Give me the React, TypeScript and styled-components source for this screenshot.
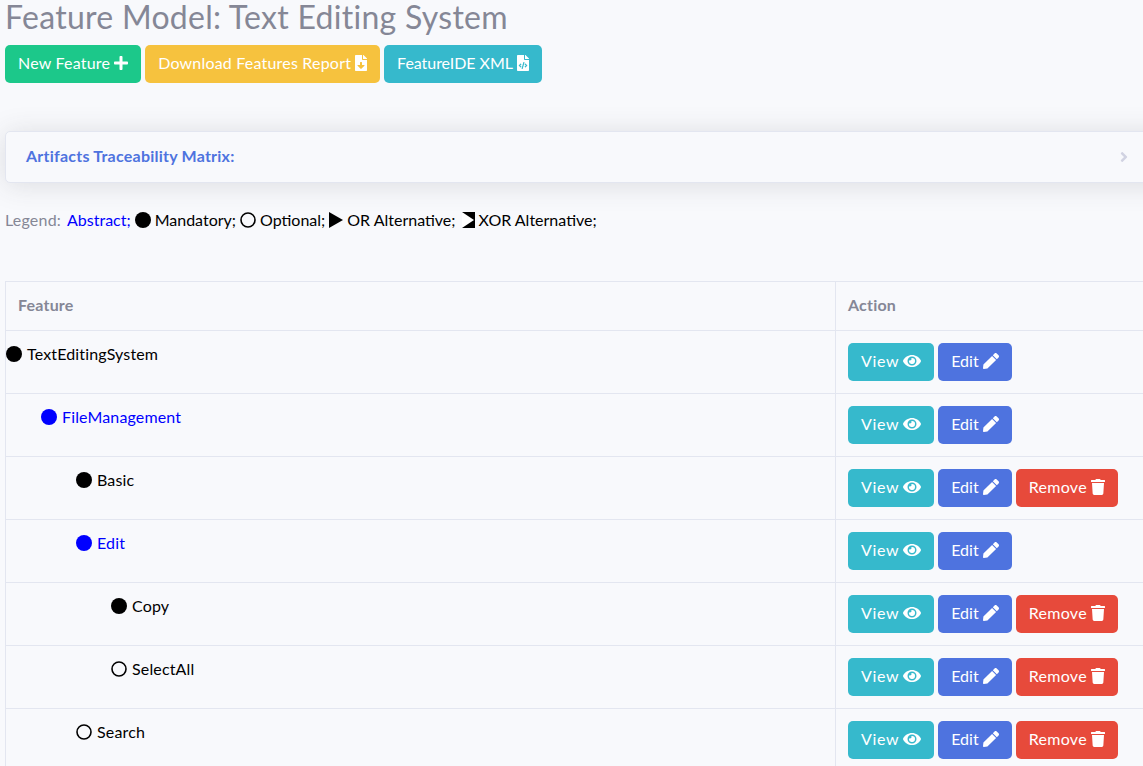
import React from "react";
import styled, { createGlobalStyle } from "styled-components";
import {
  FaAngleRight,
  FaEye,
  FaFileCode,
  FaFileDownload,
  FaPen,
  FaPlus,
  FaTrash,
} from "react-icons/fa";

type Kind = "mandatory" | "optional";

interface Feature {
  name: string;
  level: number;
  kind: Kind;
  abstract?: boolean;
  removable?: boolean;
}

const features: Feature[] = [
  { name: "TextEditingSystem", level: 0, kind: "mandatory" },
  { name: "FileManagement", level: 1, kind: "mandatory", abstract: true },
  { name: "Basic", level: 2, kind: "mandatory", removable: true },
  { name: "Edit", level: 2, kind: "mandatory", abstract: true },
  { name: "Copy", level: 3, kind: "mandatory", removable: true },
  { name: "SelectAll", level: 3, kind: "optional", removable: true },
  { name: "Search", level: 2, kind: "optional", removable: true },
];

const colors = {
  success: "#1cc88a",
  warning: "#f6c23e",
  info: "#36b9cc",
  primary: "#4e73df",
  danger: "#e74a3b",
};

const GlobalStyle = createGlobalStyle`
  html, body {
    margin: 0;
    height: 100%;
    overflow: hidden;
    background: #f8f9fc;
  }
  body {
    font-family: "Lato", "Open Sans", sans-serif;
    font-size: 16px;
    line-height: 1.5;
    color: #858796;
  }
`;

const Page = styled.div`
  width: 1180px;
  padding-left: 5px;
`;

const Title = styled.h2`
  margin: 0 0 11px;
  font-size: 32px;
  font-weight: 400;
  line-height: 34px;
  letter-spacing: 0.28px;
  color: #858796;
`;

const Toolbar = styled.div`
  display: flex;
  gap: 4px;
`;

const Button = styled.a<{ $color: keyof typeof colors; $spacing: number }>`
  display: inline-flex;
  align-items: center;
  gap: 4px;
  height: 38px;
  box-sizing: border-box;
  padding: 0 13px 2px;
  border-radius: 5px;
  background: ${(p) => colors[p.$color]};
  color: #fff;
  font-size: 16px;
  letter-spacing: ${(p) => p.$spacing}px;
  white-space: nowrap;
`;

// font awesome glyphs are not square, so each one keeps its own width
const PlusIcon = styled(FaPlus)`
  width: 14px;
  height: 16px;
`;

const DownloadIcon = styled(FaFileDownload)`
  width: 12px;
  height: 16px;
`;

const CodeIcon = styled(FaFileCode)`
  width: 12px;
  height: 16px;
`;

const EyeIcon = styled(FaEye)`
  width: 18px;
  height: 16px;
`;

const PenIcon = styled(FaPen)`
  width: 16px;
  height: 16px;
`;

const TrashIcon = styled(FaTrash)`
  width: 14px;
  height: 16px;
`;

const Card = styled.div`
  margin-top: 48px;
  display: flex;
  align-items: center;
  justify-content: space-between;
  height: 52px;
  box-sizing: border-box;
  padding: 0 52px 1px 20px;
  border: 1px solid #e3e6f0;
  border-radius: 5px;
  background: #f8f9fc;
  box-shadow: 0 2px 28px rgba(58, 59, 69, 0.15);
`;

const CardTitle = styled.span`
  padding-bottom: 2px;
  font-size: 16px;
  font-weight: 700;
  letter-spacing: 0.23px;
  color: ${colors.primary};
`;

const Chevron = styled(FaAngleRight)`
  font-size: 16px;
  color: #d1d3e2;
`;

const Legend = styled.div`
  margin-top: 25px;
  display: flex;
  align-items: center;
  gap: 4px;
  height: 24px;
  font-size: 16px;
`;

const LegendItem = styled.span<{ $tone?: "abstract" }>`
  color: ${(p) => (p.$tone === "abstract" ? "#0000ff" : "#000")};
`;

const LegendLabel = styled.span`
  margin-right: 2px;
  letter-spacing: 0.2px;
`;

const XorSlot = styled.span`
  display: flex;
  margin-left: 2px;
`;

const Table = styled.table`
  margin-top: 49px;
  width: 100%;
  border-collapse: collapse;
  table-layout: fixed;
`;

const HeadCell = styled.th<{ $width?: number }>`
  ${(p) => (p.$width ? `width: ${p.$width}px;` : "")}
  height: 49px;
  box-sizing: border-box;
  padding: 0 12px 2px;
  border: 1px solid #e3e6f0;
  text-align: left;
  font-weight: 700;
  letter-spacing: 0.2px;
  color: #858796;
`;

const Cell = styled.td`
  height: 63px;
  box-sizing: border-box;
  padding: 12px;
  border: 1px solid #e3e6f0;
  vertical-align: top;
`;

const NameCell = styled(Cell)`
  padding: 11px 12px 12px 0;
`;

const FeatureName = styled.div<{ $level: number; $abstract?: boolean }>`
  display: flex;
  align-items: center;
  gap: 5px;
  padding-left: ${(p) => p.$level * 35}px;
  letter-spacing: 0.15px;
  color: ${(p) => (p.$abstract ? "#0000ff" : "#000")};
`;

const Actions = styled.div`
  display: flex;
  gap: 4px;
`;

const Dot = ({ kind, color = "#000" }: { kind: Kind; color?: string }) => (
  <svg width="16" height="16" viewBox="0 0 16 16">
    {kind === "mandatory" ? (
      <circle cx="8" cy="8" r="8" fill={color} />
    ) : (
      <circle cx="8" cy="8" r="7" fill="none" stroke={color} strokeWidth="1.6" />
    )}
  </svg>
);

const OrIcon = () => (
  <svg width="14" height="16" viewBox="0 0 14 16">
    <path d="M0 0 L14 8 L0 16 Z" fill="#000" />
  </svg>
);

const XorIcon = () => (
  <svg width="13" height="16" viewBox="0 0 13 16">
    <rect width="13" height="16" fill="#000" />
    <path d="M0 0 L12 8 L0 16 Z" fill="#fff" />
  </svg>
);

export default function App() {
  return (
    <Page>
      <GlobalStyle />
      <Title>Feature Model: Text Editing System</Title>
      <Toolbar>
        <Button $color="success" $spacing={0.2}>
          New Feature <PlusIcon />
        </Button>
        <Button $color="warning" $spacing={0.2}>
          Download Features Report <DownloadIcon />
        </Button>
        <Button $color="info" $spacing={-0.05}>
          FeatureIDE XML <CodeIcon />
        </Button>
      </Toolbar>

      <Card>
        <CardTitle>Artifacts Traceability Matrix:</CardTitle>
        <Chevron />
      </Card>

      <Legend>
        <LegendLabel>Legend:</LegendLabel>
        <LegendItem $tone="abstract">Abstract;</LegendItem>
        <Dot kind="mandatory" />
        <LegendItem>Mandatory;</LegendItem>
        <Dot kind="optional" />
        <LegendItem>Optional;</LegendItem>
        <OrIcon />
        <LegendItem>OR Alternative;</LegendItem>
        <XorSlot>
          <XorIcon />
        </XorSlot>
        <LegendItem>XOR Alternative;</LegendItem>
      </Legend>

      <Table>
        <thead>
          <tr>
            <HeadCell $width={830}>Feature</HeadCell>
            <HeadCell>Action</HeadCell>
          </tr>
        </thead>
        <tbody>
          {features.map((f) => (
            <tr key={f.name}>
              <NameCell>
                <FeatureName $level={f.level} $abstract={f.abstract}>
                  <Dot kind={f.kind} color={f.abstract ? "#0000ff" : "#000"} />
                  {f.name}
                </FeatureName>
              </NameCell>
              <Cell>
                <Actions>
                  <Button $color="info" $spacing={0.65}>
                    View <EyeIcon />
                  </Button>
                  <Button $color="primary" $spacing={0}>
                    Edit <PenIcon />
                  </Button>
                  {f.removable && (
                    <Button $color="danger" $spacing={0.3}>
                      Remove <TrashIcon />
                    </Button>
                  )}
                </Actions>
              </Cell>
            </tr>
          ))}
        </tbody>
      </Table>
    </Page>
  );
}
